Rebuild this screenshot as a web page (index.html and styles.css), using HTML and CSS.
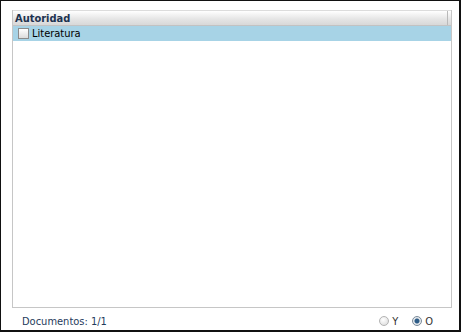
FILE: index.html
```html
<!DOCTYPE html>
<html lang="es">
<head>
  <meta charset="UTF-8" />
  <title>Autoridad</title>
  <link rel="stylesheet" href="styles.css">
</head>
<body>
  <div class="frame">
    <div class="grid">
      <div class="grid-head">
        <span class="col-title">Autoridad</span>
        <span class="col-end"></span>
      </div>
      <div class="grid-row selected">
        <span class="check"></span>
        <span>Literatura</span>
      </div>
    </div>
    <div class="status">
      <span class="docs">Documentos: 1/1</span>
      <span class="ops">
        <label class="opt"><span class="radio"></span>Y</label>
        <label class="opt"><span class="radio on"></span>O</label>
      </span>
    </div>
  </div>
</body>
</html>
```
FILE: styles.css
```css
html, body {
  margin: 0;
  padding: 0;
}
body {
  font-family: "DejaVu Sans Condensed", "DejaVu Sans", Verdana, sans-serif;
  font-stretch: condensed;
  font-size: 11px;
  background: #fff;
}
.frame {
  width: 461px;
  height: 332px;
  box-sizing: border-box;
  border: 2px solid #111;
  border-top-width: 1px;
  border-left-width: 1px;
  display: flex;
  flex-direction: column;
}
.grid {
  margin: 9px 0 0 11px;
  width: 440px;
  height: 298px;
  box-sizing: border-box;
  border: 1px solid #c6c6c6;
  border-top: none;
}
.grid-head {
  height: 16px;
  display: flex;
  align-items: center;
  background: linear-gradient(#ffffff, #e4e4e4 60%, #d8d8d8);
  border-top: 1px solid #dcdcdc;
  border-bottom: 1px solid #c2c2c2;
  box-sizing: border-box;
}
.col-title {
  flex: 1;
  padding-left: 2px;
  font-weight: bold;
  color: #1d3350;
}
.col-end {
  width: 1px;
  height: 14px;
  background: #b9b9b9;
  margin-right: 3px;
}
.grid-row {
  height: 15px;
  display: flex;
  align-items: center;
  color: #000;
}
.grid-row.selected {
  background: #a7d3e6;
}
.check {
  width: 9px;
  height: 9px;
  margin: 0 3px 0 5px;
  border: 1px solid #8b8b8b;
  background: linear-gradient(#ffffff, #dcdcdc);
}
.status {
  flex: 1;
  display: flex;
  align-items: center;
  justify-content: space-between;
  padding: 4px 26px 0 21px;
  color: #1f3b5c;
}
.ops {
  display: flex;
  gap: 14px;
}
.opt {
  display: flex;
  align-items: center;
  gap: 3px;
  color: #333;
}
.radio {
  width: 8px;
  height: 8px;
  border-radius: 50%;
  border: 1px solid #b3b3b3;
  background: radial-gradient(circle at 40% 35%, #fff, #d8d8d8);
}
.radio.on {
  border-color: #7a8a99;
  background: radial-gradient(circle, #2c5b86 0, #2c5b86 2px, #e4e8ec 3px);
}
```
